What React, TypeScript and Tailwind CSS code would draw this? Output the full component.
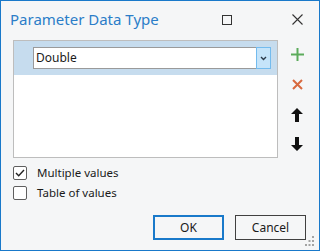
export default function App() {
  return (
    <div
      className="relative w-[320px] h-[251px] bg-[#f5f6f7] border border-[#1979ca] flex flex-col text-[#1a1a1a]"
      style={{ fontFamily: '"Noto Sans", "Open Sans", sans-serif' }}
    >
      {/* title bar */}
      <div className="h-[37px] flex items-center shrink-0">
        <span className="ml-[9px] text-[15px] text-[#2b7dc8] leading-none">Parameter Data Type</span>
        <div className="ml-auto mr-[60px] w-[10px] h-[10px] border border-[#333]" />
        <svg className="mr-[16px]" width="11" height="11" viewBox="0 0 11 11">
          <path d="M0.5 0.5 10.5 10.5 M10.5 0.5 0.5 10.5" stroke="#333" strokeWidth="1.1" />
        </svg>
      </div>

      <div className="flex ml-[12px] mt-[2px]">
        {/* list */}
        <div className="w-[265px] h-[118px] bg-white border border-[#bdbdbd] shrink-0">
          <div className="h-[34px] bg-[#c6dcee] flex items-center pl-[19px] pr-[6px]">
            <div className="flex-1 h-[22px] bg-white border border-[#9a9a9a] flex items-center">
              <span className="ml-[2px] text-[12px]">Double</span>
              <div className="ml-auto w-[15px] h-[22px] -mr-px -my-px bg-[#c5e4fa] border border-[#73bbee] flex items-center justify-center">
                <svg width="7" height="5" viewBox="0 0 7 5">
                  <path d="M1 1 3.5 3.5 6 1" stroke="#2b3a4a" strokeWidth="1.4" fill="none" />
                </svg>
              </div>
            </div>
          </div>
        </div>

        {/* side buttons */}
        <div className="flex flex-col items-center ml-[12px] w-[14px]">
          <svg className="mt-[8px]" width="13" height="13" viewBox="0 0 13 13">
            <path d="M6.5 0V13 M0 6.5H13" stroke="#5cab5c" strokeWidth="2" />
          </svg>
          <svg className="mt-[18px]" width="11" height="11" viewBox="0 0 11 11">
            <path d="M1 1 10 10 M10 1 1 10" stroke="#d8693f" strokeWidth="2" />
          </svg>
          <svg className="mt-[18px]" width="12" height="14" viewBox="0 0 12 14">
            <path d="M6 0 12 6H8V14H4V6H0Z" fill="#111" />
          </svg>
          <svg className="mt-[15px]" width="12" height="14" viewBox="0 0 12 14">
            <path d="M6 14 12 8H8V0H4V8H0Z" fill="#111" />
          </svg>
        </div>
      </div>

      {/* checkboxes */}
      <div className="ml-[12px] mt-[8px] flex flex-col gap-[6px] text-[11.5px]">
        <label className="flex items-center gap-[10px] h-[14px]">
          <span className="w-[14px] h-[14px] border border-[#5f5f5f] rounded-[2px] bg-white flex items-center justify-center">
            <svg width="10" height="8" viewBox="0 0 10 8">
              <path d="M1 4 3.7 6.7 9 1" stroke="#222" strokeWidth="1.4" fill="none" />
            </svg>
          </span>
          Multiple values
        </label>
        <label className="flex items-center gap-[10px] h-[14px]">
          <span className="w-[14px] h-[14px] border border-[#5f5f5f] rounded-[2px] bg-white" />
          Table of values
        </label>
      </div>

      {/* buttons */}
      <div className="mt-auto mb-[10px] flex justify-end gap-[11px] mr-[13px] text-[12px]">
        <button className="w-[71px] h-[25px] border-2 border-[#1979ca] bg-[#f5f6f7]">OK</button>
        <button className="w-[71px] h-[25px] border border-[#404040] bg-[#f5f6f7]">Cancel</button>
      </div>

      {/* resize grip */}
      <svg className="absolute right-[5px] bottom-[4px]" width="9" height="10" viewBox="0 0 9 10">
        <g fill="#a3a3a3">
          <rect x="7" y="0" width="2" height="2" />
          <rect x="3.5" y="4" width="2" height="2" />
          <rect x="7" y="4" width="2" height="2" />
          <rect x="0" y="8" width="2" height="2" />
          <rect x="3.5" y="8" width="2" height="2" />
          <rect x="7" y="8" width="2" height="2" />
        </g>
      </svg>
    </div>
  );
}
